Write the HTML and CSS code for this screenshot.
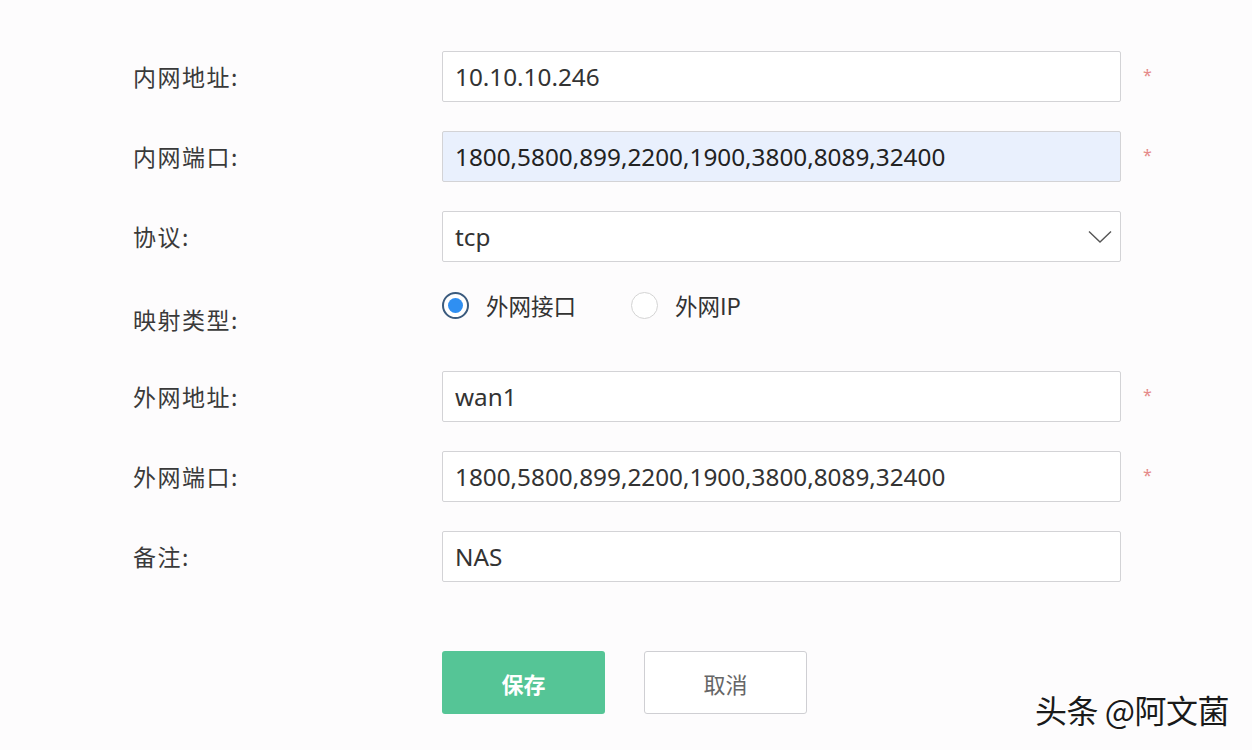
FILE: index.html
```html
<!DOCTYPE html>
<html lang="zh">
<head>
<meta charset="utf-8">
<link rel="stylesheet" href="styles.css">
</head>
<body>
<div class="page">
  <form class="form">
    <div class="row">
      <div class="label">内网地址:</div>
      <div class="field"><div class="input">10.10.10.246</div></div>
      <div class="req">*</div>
    </div>
    <div class="row">
      <div class="label">内网端口:</div>
      <div class="field"><div class="input filled">1800,5800,899,2200,1900,3800,8089,32400</div></div>
      <div class="req">*</div>
    </div>
    <div class="row">
      <div class="label">协议:</div>
      <div class="field"><div class="input select">tcp
        <svg class="chev" width="24" height="14" viewBox="0 0 24 14"><path d="M1 1.5 L12 12 L23 1.5" fill="none" stroke="#555" stroke-width="1.4"/></svg></div></div>
      <div class="req"></div>
    </div>
    <div class="row radio-row">
      <div class="label">映射类型:</div>
      <div class="field radios">
        <span class="radio"><span class="dot on"></span>外网接口</span>
        <span class="radio"><span class="dot"></span>外网IP</span>
      </div>
      <div class="req"></div>
    </div>
    <div class="row">
      <div class="label">外网地址:</div>
      <div class="field"><div class="input">wan1</div></div>
      <div class="req">*</div>
    </div>
    <div class="row">
      <div class="label">外网端口:</div>
      <div class="field"><div class="input">1800,5800,899,2200,1900,3800,8089,32400</div></div>
      <div class="req">*</div>
    </div>
    <div class="row">
      <div class="label">备注:</div>
      <div class="field"><div class="input">NAS</div></div>
      <div class="req"></div>
    </div>
    <div class="buttons">
      <div class="btn save">保存</div>
      <div class="btn cancel">取消</div>
    </div>
  </form>
  <div class="watermark">头条 @阿文菌</div>
</div>
</body>
</html>
```
FILE: styles.css
```css
html, body {
  margin: 0;
  padding: 0;
  background: #fdfcfd;
}
body {
  font-family: "Noto Sans", "Noto Sans CJK SC", sans-serif;
  color: #333;
}
.page {
  width: 1252px;
  height: 750px;
  position: relative;
  overflow: hidden;
}
.form {
  padding: 51px 0 0 133px;
  display: flex;
  flex-direction: column;
  gap: 30px;
}
.row {
  display: flex;
  align-items: center;
  height: 50px;
}
.label {
  width: 309px;
  font-size: 23px;
  color: #3a3a3a;
  font-family: "Noto Sans CJK SC", sans-serif;
  letter-spacing: 1.5px;
}
.field {
  width: 679px;
}
.input {
  box-sizing: border-box;
  height: 51px;
  border: 1px solid #d3d3d6;
  border-radius: 2px;
  background: #fff;
  padding: 0 12px;
  display: flex;
  align-items: center;
  font-size: 24.3px;
  color: #333;
  position: relative;
}
.input.filled {
  background: #e9f0fd;
  color: #222;
}
.input.select {
  justify-content: space-between;
  padding-right: 8px;
}
.chev {
  margin-top: 2px;
}
.req {
  margin-left: 22px;
  color: #e58a8a;
  font-size: 16px;
  align-self: center;
  margin-top: -2px;
}
.radio-row {
  align-items: flex-start;
}
.radio-row .label {
  padding-top: 11px;
}
.radios {
  display: flex;
  gap: 55px;
  font-size: 22.5px;
  font-family: "Noto Sans CJK SC", sans-serif;
  color: #333;
  margin-top: -2px;
}
.radio {
  display: flex;
  align-items: center;
  gap: 17px;
}
.dot {
  box-sizing: border-box;
  width: 27px;
  height: 27px;
  border-radius: 50%;
  border: 1.5px solid #d4d4d4;
  background: #fff;
  position: relative;
}
.dot.on {
  border: 2px solid #3b5b7e;
}
.dot.on::after {
  content: "";
  position: absolute;
  left: 4px;
  top: 4px;
  width: 15px;
  height: 15px;
  border-radius: 50%;
  background: #2f8ff2;
}
.buttons {
  display: flex;
  gap: 39px;
  margin-left: 309px;
  margin-top: 40px;
}
.btn {
  box-sizing: border-box;
  width: 163px;
  height: 63px;
  border-radius: 3px;
  display: flex;
  align-items: center;
  justify-content: center;
  font-size: 22px;
  font-family: "Noto Sans CJK SC", sans-serif;
}
.save {
  background: #55c596;
  color: #fff;
  font-weight: bold;
}
.cancel {
  background: #fff;
  border: 1px solid #cfcfd3;
  color: #666;
}
.watermark {
  position: absolute;
  right: 23px;
  bottom: 18px;
  font-size: 32px;
  letter-spacing: -0.5px;
  font-family: "Noto Sans CJK SC", sans-serif;
  color: #1a1a1a;
  text-shadow: 1px 1px 0 #fff, -1px -1px 0 #fff;
}
```
